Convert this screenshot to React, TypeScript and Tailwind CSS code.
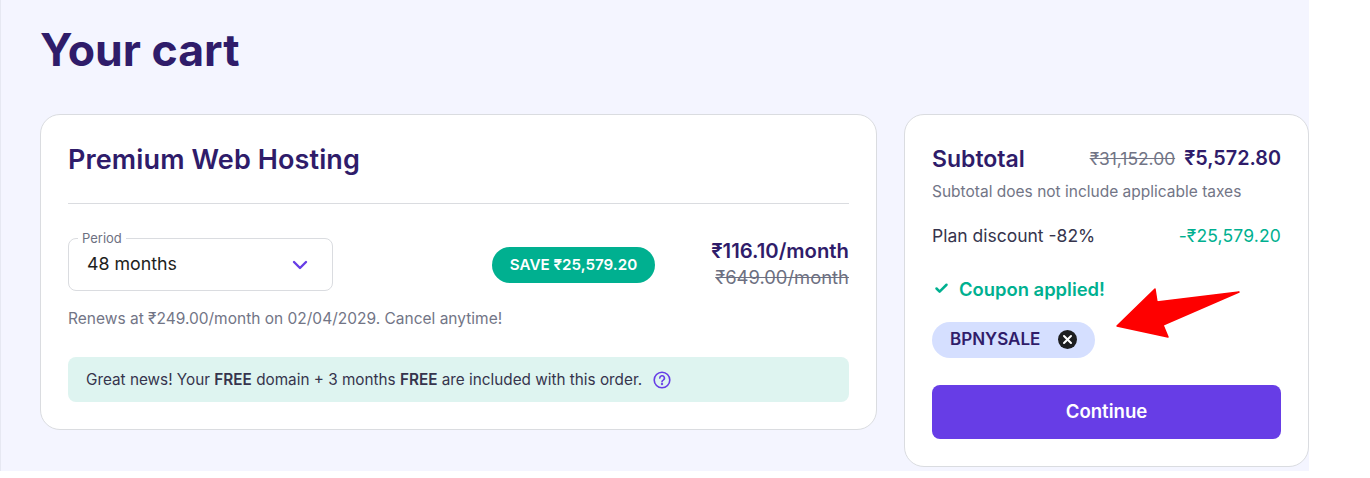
import { Check, ChevronDown } from 'lucide-react';

const font = "font-['Inter','Noto_Sans',sans-serif]";

function PeriodSelect() {
  return (
    <div className="relative flex h-[53px] w-[265px] items-center justify-between rounded-lg border border-[#dadce0] bg-white pl-[18px] pr-[20px]">
      <span className="absolute -top-[8px] left-[9px] bg-white px-1 text-[13px] leading-[15px] text-[#6d7081]">Period</span>
      <span className="text-[17.8px] text-[#1d1e20]">48 months</span>
      <ChevronDown className="h-[24px] w-[24px] text-[#673de6]" strokeWidth={2.4} />
    </div>
  );
}

function PlanCard() {
  return (
    <div className="h-[316px] w-[837px] shrink-0 rounded-[20px] border border-[#dadce0] bg-white px-[27px] pt-[27px]">
      <h2 className="text-[27px] leading-[36px] font-semibold tracking-[0.12px] text-[#2f1c6a]">Premium Web Hosting</h2>
      <div className="mt-[25px] h-px bg-[#dadce0]" />
      <div className="mt-[34px] flex items-start">
        <PeriodSelect />
        <div className="ml-[159px] mt-[9px] flex h-[36px] w-[163px] items-center justify-center rounded-full bg-[#00b090] text-[15.2px] font-semibold text-white">
          SAVE ₹25,579.20
        </div>
        <div className="ml-auto text-right">
          <div className="text-[20.3px] leading-[26px] font-semibold text-[#2f1c6a]">₹116.10/month</div>
          <div className="text-[18.4px] leading-[26px] text-[#6d7081] line-through">₹649.00/month</div>
        </div>
      </div>
      <p className="mt-[17px] text-[15.5px] leading-[22px] text-[#727586]">Renews at ₹249.00/month on 02/04/2029. Cancel anytime!</p>
      <div className="mt-[27px] flex h-[45px] items-center rounded-lg bg-[#def4f0] pl-[18px] text-[15.3px] text-[#36344d]">
        <span className="pt-px">
          Great news! Your <b className="font-semibold">FREE</b> domain + 3 months <b className="font-semibold">FREE</b> are included with this order.
        </span>
        <svg className="ml-[11px] h-[18px] w-[18px]" viewBox="0 0 18 18" fill="none" stroke="#673de6" strokeWidth="1.6" strokeLinecap="round">
          <circle cx="9" cy="9" r="7.8" />
          <path d="M6.8 7.1a2.3 2.3 0 1 1 3.4 2c-.8.4-1.2.9-1.2 1.7" />
          <circle cx="9" cy="13" r="0.4" fill="#673de6" />
        </svg>
      </div>
    </div>
  );
}

function SummaryCard() {
  return (
    <div className="h-[353px] w-[405px] shrink-0 rounded-[20px] border border-[#dadce0] bg-white px-[27px] pt-[29px]">
      <div className="flex items-center justify-between">
        <span className="text-[23px] leading-[28px] font-semibold text-[#2f1c6a]">Subtotal</span>
        <div className="flex items-center gap-[9px]">
          <span className="text-[17.4px] text-[#727586] line-through">₹31,152.00</span>
          <span className="text-[19.8px] font-semibold text-[#2f1c6a]">₹5,572.80</span>
        </div>
      </div>
      <p className="mt-[8px] text-[15.5px] leading-[20px] text-[#727586]">Subtotal does not include applicable taxes</p>
      <div className="mt-[22px] flex items-center justify-between text-[17.5px] leading-[24px]">
        <span className="text-[#36344d]">Plan discount -82%</span>
        <span className="tracking-[0.15px] text-[#00b090]">-₹25,579.20</span>
      </div>
      <div className="mt-[29px] flex items-center gap-[10px] pl-[2px]">
        <Check className="h-[15px] w-[15px] text-[#00b090]" strokeWidth={4} />
        <span className="text-[18.4px] leading-[24px] font-semibold text-[#00b090]">Coupon applied!</span>
      </div>
      <div className="mt-[21px] flex h-[36px] w-[163px] items-center rounded-full bg-[#d5dfff] pl-[18px]">
        <span className="text-[17px] font-semibold text-[#2f1c6a]">BPNYSALE</span>
        <svg className="ml-[18px] h-[19px] w-[19px]" viewBox="0 0 19 19" fill="none">
          <circle cx="9.5" cy="9.5" r="9.5" fill="#1d1e20" />
          <path d="M6 6l7 7M13 6l-7 7" stroke="#fff" strokeWidth="2" strokeLinecap="round" />
        </svg>
      </div>
      <button className="mt-[27px] h-[54px] w-full rounded-lg bg-[#673de6] text-[18.6px] font-semibold text-white">Continue</button>
    </div>
  );
}

export default function App() {
  return (
    <div className={`${font} relative h-[478px] w-[1370px] overflow-hidden bg-white`}>
      <div className="h-[471px] w-[1309px] border-l border-[#e6e8f2] bg-[#f4f5ff] pl-[39px]">
        <h1 className="pt-[24px] text-[44.6px] leading-[53px] font-bold text-[#2f1c6a]">Your cart</h1>
        <div className="mt-[37px] flex items-start gap-[27px]">
          <PlanCard />
          <SummaryCard />
        </div>
      </div>
      {/* annotation arrow drawn over the screenshot */}
      <svg className="absolute top-[285px] left-[1112px] h-[58px] w-[134px]" viewBox="1112 285 134 58">
        <path d="M1117 326L1155 289L1157 302L1239 292L1163 325L1168 337Z" fill="#fe0000" stroke="#fe0000" strokeWidth="1.5" strokeLinejoin="round" />
      </svg>
    </div>
  );
}
